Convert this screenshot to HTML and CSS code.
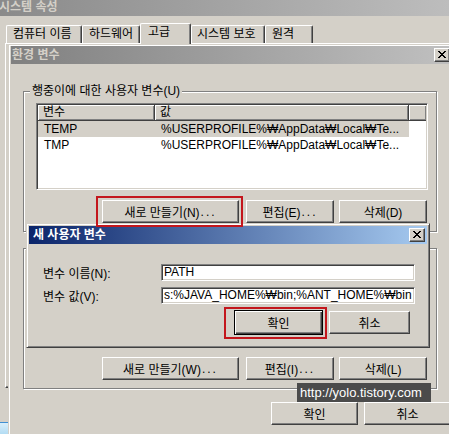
FILE: index.html
```html
<!DOCTYPE html>
<html lang="ko">
<head>
<meta charset="utf-8">
<title>환경 변수</title>
<link rel="stylesheet" href="styles.css">
</head>
<body>
<div class="sys">
  <div class="sys-title"><span>시스템 속성</span></div>
  <div class="tabs">
    <div class="tab t1">컴퓨터 이름</div>
    <div class="tab t2">하드웨어</div>
    <div class="tab t3 sel">고급</div>
    <div class="tab t4">시스템 보호</div>
    <div class="tab t5">원격</div>
  </div>
  <div class="panel"></div>
  <div class="sys-foot"><div class="sys-btn"></div></div>
</div>

<div class="win env">
  <div class="titlebar inactive">
    <span class="ttext">환경 변수</span>
    <span class="xbtn"><svg width="8" height="7" viewBox="0 0 8 7" shape-rendering="crispEdges"><path d="M0 0h2v1H0zM6 0h2v1H6zM1 1h2v1H1zM5 1h2v1H5zM2 2h4v1H2zM3 3h2v1H3zM2 4h4v1H2zM1 5h2v1H1zM5 5h2v1H5zM0 6h2v1H0zM6 6h2v1H6z" fill="#000"/></svg></span>
  </div>
  <div class="env-body">
    <div class="group">
      <span class="legend">행중이에 대한 사용자 변수(U)</span>
      <div class="list">
        <div class="lhead"><div class="hc c1">변수</div><div class="hc c2">값</div><div class="hc fill"></div></div>
        <div class="row sel"><div class="c1">TEMP</div><div class="c2">%USERPROFILE%₩AppData₩Local₩Te...</div></div>
        <div class="row"><div class="c1">TMP</div><div class="c2">%USERPROFILE%₩AppData₩Local₩Te...</div></div>
      </div>
      <div class="btnrow">
        <button class="btn w-new">새로 만들기(N)<span class="dots">...</span></button>
        <button class="btn w-edit">편집(E)<span class="dots">...</span></button>
        <button class="btn w-del">삭제(D)</button>
      </div>
    </div>
    <div class="group g2">
      <div class="list"></div>
      <div class="btnrow">
        <button class="btn w-new">새로 만들기(W)<span class="dots">...</span></button>
        <button class="btn w-edit">편집(I)<span class="dots">...</span></button>
        <button class="btn w-del">삭제(L)</button>
      </div>
    </div>
    <div class="footrow">
      <button class="btn w-ok">확인</button>
      <button class="btn w-ok">취소</button>
    </div>
  </div>
</div>

<div class="win dlg">
  <div class="titlebar active">
    <span class="ttext">새 사용자 변수</span>
    <span class="xbtn"><svg width="8" height="7" viewBox="0 0 8 7" shape-rendering="crispEdges"><path d="M0 0h2v1H0zM6 0h2v1H6zM1 1h2v1H1zM5 1h2v1H5zM2 2h4v1H2zM3 3h2v1H3zM2 4h4v1H2zM1 5h2v1H1zM5 5h2v1H5zM0 6h2v1H0zM6 6h2v1H6z" fill="#000"/></svg></span>
  </div>
  <div class="dlg-body">
    <div class="frow"><span class="flabel">변수 이름(N):</span><div class="field">PATH</div></div>
    <div class="frow"><span class="flabel">변수 값(V):</span><div class="field">s:%JAVA_HOME%₩bin;%ANT_HOME%₩bin</div></div>
    <div class="dbtns">
      <button class="btn default">확인</button>
      <button class="btn w-cancel">취소</button>
    </div>
  </div>
</div>

<div class="mark m1"></div>
<div class="mark m2"></div>
<div class="watermark">http://yolo.tistory.com</div>
</body>
</html>
```

FILE: styles.css
```css
* { box-sizing: border-box; }
html, body { margin: 0; }
body {
  width: 449px;
  height: 434px;
  overflow: hidden;
  position: relative;
  background: #d4d0c8;
  font-family: "Liberation Sans", "Noto Sans CJK KR", sans-serif;
  font-size: 12px;
  color: #000;
}

/* background: system properties window */
.sys-title {
  height: 16px;
  background: linear-gradient(to right, #8a8a8a, #bdbdbd);
  color: #d4d0c8;
  font-weight: bold;
  line-height: 15px;
  white-space: nowrap;
  overflow: hidden;
}
.sys-title span { display: inline-block; margin-left: -1px; }

.tabs {
  display: flex;
  align-items: flex-end;
  height: 20px;
  margin-top: 7px;
  padding-left: 6px;
  position: relative;
  z-index: 1;
}
.tab {
  height: 18px;
  background: #d4d0c8;
  border-top: 1px solid #fff;
  border-left: 1px solid #fff;
  border-right: 1px solid #404040;
  box-shadow: inset -1px 0 #808080;
  border-radius: 2px 2px 0 0;
  padding-left: 6px;
  line-height: 16px;
  white-space: nowrap;
}
.tab.sel { height: 21px; margin-bottom: -1px; padding-left: 7px; line-height: 17px; }
.t1 { width: 76px; }
.t2 { width: 58px; }
.t3 { width: 51px; }
.t4 { width: 74px; padding-left: 5px; }
.t5 { width: 48px; }

.panel {
  margin-left: 5px;
  height: 345px;
  border-top: 1px solid #fff;
  border-left: 1px solid #fff;
  border-bottom: 1px solid #404040;
  box-shadow: inset 0 -1px #808080;
}
.sys-foot { margin-top: 34px; }
.sys-btn {
  width: 40px;
  height: 12px;
  border-top: 1px solid #3f8fd2;
  background: linear-gradient(#d8eefa, #b3dcf3);
}

/* windows */
.win { position: absolute; background: #d4d0c8; }
.env {
  left: 8px;
  top: 44px;
  width: 446px;
  height: 395px;
  border-top: 1px solid #d4d0c8;
  border-left: 1px solid #d4d0c8;
  box-shadow: inset 1px 1px #fff;
  padding: 1px 2px 2px 2px;
}
.titlebar {
  height: 18px;
  display: flex;
  align-items: center;
  justify-content: space-between;
  padding: 0 2px 0 1px;
  font-weight: bold;
  color: #fff;
  white-space: nowrap;
}
.titlebar.inactive { background: linear-gradient(to right, #808080, #c0c0c0); color: #d4d0c8; }
.titlebar.active { background: linear-gradient(to right, #0a246a, #a6caf0); padding-left: 4px; }
.ttext { line-height: 18px; }
.xbtn {
  width: 16px;
  height: 14px;
  background: #d4d0c8;
  border: 1px solid;
  border-color: #fff #404040 #404040 #fff;
  box-shadow: inset -1px -1px #808080;
  display: flex;
  align-items: center;
  justify-content: center;
  padding: 0 1px 1px 0;
}
.xbtn svg { display: block; }

.env-body { padding: 27px 0 0 12px; }
.group {
  position: relative;
  width: 414px;
  height: 141px;
  border: 1px solid #808080;
  box-shadow: inset 1px 1px #fff, 1px 1px #fff;
  padding: 11px 0 0 12px;
}
.group.g2 { margin-top: 16px; }
.legend {
  position: absolute;
  left: 6px;
  top: -8px;
  padding: 0 2px;
  background: #d4d0c8;
  line-height: 14px;
  white-space: nowrap;
}

.list {
  width: 392px;
  height: 87px;
  background: #fff;
  border: 1px solid;
  border-color: #808080 #fff #fff #808080;
  box-shadow: inset 1px 1px #404040, inset -1px -1px #d4d0c8;
  padding: 1px;
  overflow: hidden;
}
.lhead { display: flex; height: 16px; }
.hc {
  height: 16px;
  background: #d4d0c8;
  border-right: 1px solid #404040;
  border-bottom: 1px solid #404040;
  box-shadow: inset 1px 1px #fff, inset -1px -1px #808080;
  padding-left: 5px;
  line-height: 15px;
  white-space: nowrap;
}
.hc.c1 { width: 117px; }
.hc.c2 { width: 254px; }
.hc.fill { flex: 1; border-right: 0; }
.row { display: flex; height: 16px; line-height: 16px; white-space: nowrap; }
.row .c1 { width: 117px; padding-left: 6px; }
.row .c2 { padding-left: 6px; }
.row.sel { width: 371px; background: #d4d0c8; }

.btn {
  height: 23px;
  background: #d4d0c8;
  border: 1px solid;
  border-color: #fff #404040 #404040 #fff;
  box-shadow: inset -1px -1px #808080;
  font: inherit;
  color: #000;
  padding: 0;
  display: flex;
  align-items: center;
  justify-content: center;
  white-space: nowrap;
}
.dots { letter-spacing: 2px; margin-left: 1px; }
.btnrow {
  display: flex;
  justify-content: flex-end;
  width: 392px;
  margin-top: 10px;
  padding-right: 1px;
}
.w-new { width: 137px; margin-right: 7px; }
.w-edit { width: 88px; margin-right: 5px; }
.w-del { width: 88px; }

.footrow {
  display: flex;
  justify-content: flex-end;
  gap: 6px;
  margin-top: 13px;
  padding-right: 1px;
}
.w-ok { width: 87px; }

/* new user variable dialog */
.dlg {
  left: 26px;
  top: 223px;
  width: 404px;
  height: 125px;
  border: 1px solid;
  border-color: #d4d0c8 #404040 #404040 #d4d0c8;
  box-shadow: inset 1px 1px #fff, inset -1px -1px #808080;
  padding: 2px;
}
.dlg-body { padding: 20px 0 0 14px; }
.frow { display: flex; align-items: center; height: 17px; margin-bottom: 6px; }
.flabel { width: 118px; white-space: nowrap; }
.field {
  width: 254px;
  height: 17px;
  background: #fff;
  border: 1px solid;
  border-color: #808080 #fff #fff #808080;
  box-shadow: inset 1px 1px #404040, inset -1px -1px #d4d0c8;
  padding-left: 2px;
  line-height: 15px;
  white-space: nowrap;
  overflow: hidden;
}
.dbtns { display: flex; align-items: flex-start; margin-left: 191px; }
.btn.default {
  width: 89px;
  height: 25px;
  border: 1px solid #000;
  box-shadow: inset 1px 1px #fff, inset -1px -1px #404040, inset -2px -2px #808080;
}
.w-cancel { width: 81px; margin-left: 6px; margin-top: 1px; }

/* annotations */
.mark { position: absolute; border: 2px solid #c3161c; }
.m1 { left: 96px; top: 196px; width: 147px; height: 31px; }
.m2 { left: 224px; top: 307px; width: 103px; height: 32px; }

.watermark {
  position: absolute;
  left: 297px;
  top: 383px;
  width: 134px;
  height: 19px;
  background: #4b4b4b;
  color: #fff;
  font-size: 13px;
  line-height: 19px;
  padding-left: 3px;
  white-space: nowrap;
}
```
